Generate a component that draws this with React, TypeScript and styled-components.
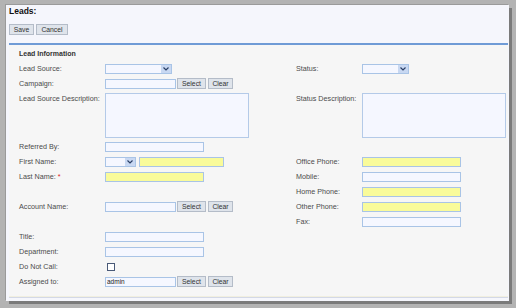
import React from 'react'
import styled, { createGlobalStyle } from 'styled-components'

const Global = createGlobalStyle`
body{
  margin:0;
  background:#b3b3b3;
  font-family: "Liberation Sans", Arial, sans-serif;
}
`

const Frame = styled.div`
width:516px;
height:308px;
padding:5px 0 0 6px;
box-sizing:border-box;
`

const Panel = styled.div`
width:503px;
height:296px;
background:#f5f6fc;
box-shadow: 3px 3px 0 #7a7a7a, -1px -1px 0 #9a9a9a;
display:flex;
flex-direction:column;
`

const Header = styled.div`
margin:0 1px 0 3px;
padding-bottom:8px;
border-bottom:2px solid #6f9bd6;
`

const Title = styled.div`
margin-top:1px;
font-size:8.5px;
line-height:10px;
font-weight:bold;
color:#111;
`

const Toolbar = styled.div`
margin-top:8px;
display:flex;
gap:2px;
`

const Button = styled.div<{ $w: number }>`
width:${p => p.$w}px;
height:11px;
box-sizing:border-box;
border:1px solid #b4bcc8;
background:#dfe4eb;
color:#333;
font-size:6.8px;
line-height:9px;
text-align:center;
`

const Body = styled.div`
margin:0 1px 0 3px;
padding:4px 0 8px 10px;
background:#f6f6f6;
border-bottom:1px solid #d3d8e6;
box-shadow: inset 0 -1px 0 #f1efe0;
`

const Section = styled.div`
font-size:7px;
line-height:10px;
font-weight:bold;
color:#333;
margin-bottom:2px;
`

const Row = styled.div<{ $h?: number }>`
display:grid;
grid-template-columns:86px 191px 66px 1fr;
height:${p => p.$h || 15}px;
align-items:${p => (p.$h ? 'start' : 'center')};
`

const Label = styled.div<{ $top?: boolean }>`
font-size:7.2px;
line-height:9px;
color:#4b4b4b;
white-space:nowrap;
padding-top:${p => (p.$top ? 3 : 0)}px;
`

const Req = styled.span`
color:#d22;
margin-left:2px;
`

const Cell = styled.div`
display:flex;
align-items:center;
`

const Input = styled.div<{ $w: number; $yellow?: boolean; $gap?: number }>`
width:${p => p.$w}px;
height:10px;
box-sizing:border-box;
border:1px solid #a9c4e6;
background:${p => (p.$yellow ? '#f9fb9a' : '#f5f7ff')};
margin-right:${p => p.$gap ?? 0}px;
font-size:6.5px;
line-height:8px;
color:#222;
padding-left:1px;
`

const Area = styled.div`
margin-top:2px;
width:144px;
height:45px;
box-sizing:border-box;
border:1px solid #b4cae8;
background:#f5f7ff;
`

const Select = styled.div<{ $w: number; $gap?: number }>`
width:${p => p.$w}px;
height:10px;
box-sizing:border-box;
border:1px solid #a9c4e6;
background:#f5f7ff;
margin-right:${p => p.$gap ?? 0}px;
display:flex;
justify-content:flex-end;
`

const Arrow = styled.div`
width:10px;
height:8px;
background:#c8d8f2;
display:flex;
align-items:center;
justify-content:center;
`

const Check = styled.div`
margin-left:2px;
width:8px;
height:8px;
box-sizing:border-box;
border:1px solid #4a5a78;
background:#fff;
`

function Drop({ w, gap }: { w: number; gap?: number }) {
  return (
    <Select $w={w} $gap={gap}>
      <Arrow>
        <svg width="6" height="4" viewBox="0 0 6 4">
          <path d="M0.5 0.5 L3 3 L5.5 0.5" stroke="#2a3f66" strokeWidth="1.2" fill="none" />
        </svg>
      </Arrow>
    </Select>
  )
}

function Lookup({ value }: { value?: string }) {
  return (
    <Cell>
      <Input $w={71} $gap={1}>{value}</Input>
      <Button $w={29} style={{ marginRight: 2 }}>Select</Button>
      <Button $w={25}>Clear</Button>
    </Cell>
  )
}

export default function App() {
  return (
    <Frame>
      <Global />
      <Panel>
        <Header>
          <Title>Leads:</Title>
          <Toolbar>
            <Button $w={25}>Save</Button>
            <Button $w={32}>Cancel</Button>
          </Toolbar>
        </Header>
        <Body>
          <Section>Lead Information</Section>
          <Row>
            <Label>Lead Source:</Label>
            <Cell><Drop w={67} /></Cell>
            <Label>Status:</Label>
            <Cell><Drop w={47} /></Cell>
          </Row>
          <Row>
            <Label>Campaign:</Label>
            <Lookup />
            <div />
            <div />
          </Row>
          <Row $h={48}>
            <Label $top>Lead Source Description:</Label>
            <Area />
            <Label $top>Status Description:</Label>
            <Area />
          </Row>
          <Row>
            <Label>Referred By:</Label>
            <Cell><Input $w={99} /></Cell>
            <div />
            <div />
          </Row>
          <Row>
            <Label>First Name:</Label>
            <Cell>
              <Drop w={31} gap={3} />
              <Input $w={85} $yellow />
            </Cell>
            <Label>Office Phone:</Label>
            <Cell><Input $w={99} $yellow /></Cell>
          </Row>
          <Row>
            <Label>Last Name:<Req>*</Req></Label>
            <Cell><Input $w={99} $yellow /></Cell>
            <Label>Mobile:</Label>
            <Cell><Input $w={99} /></Cell>
          </Row>
          <Row>
            <div />
            <div />
            <Label>Home Phone:</Label>
            <Cell><Input $w={99} $yellow /></Cell>
          </Row>
          <Row>
            <Label>Account Name:</Label>
            <Lookup />
            <Label>Other Phone:</Label>
            <Cell><Input $w={99} $yellow /></Cell>
          </Row>
          <Row>
            <div />
            <div />
            <Label>Fax:</Label>
            <Cell><Input $w={99} /></Cell>
          </Row>
          <Row>
            <Label>Title:</Label>
            <Cell><Input $w={99} /></Cell>
          </Row>
          <Row>
            <Label>Department:</Label>
            <Cell><Input $w={99} /></Cell>
          </Row>
          <Row>
            <Label>Do Not Call:</Label>
            <Cell><Check /></Cell>
          </Row>
          <Row>
            <Label>Assigned to:</Label>
            <Lookup value="admin" />
          </Row>
        </Body>
      </Panel>
    </Frame>
  )
}
